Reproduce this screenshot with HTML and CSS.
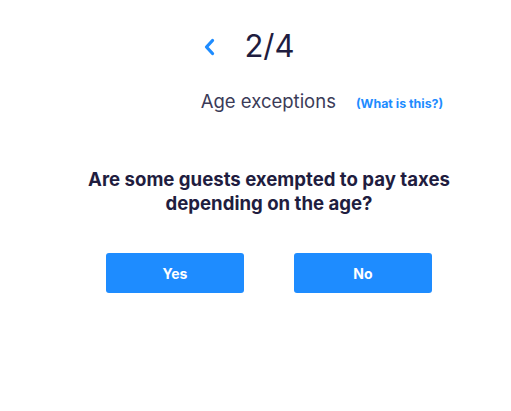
FILE: index.html
```html
<!DOCTYPE html>
<html>
<head>
<meta charset="utf-8">
<link rel="stylesheet" href="styles.css">
</head>
<body>
<div class="page">
  <div class="stepper">
    <span class="back">
      <svg width="13" height="18" viewBox="0 0 13 18"><path d="M9.5 2.5 L3.5 9 L9.5 15.5" fill="none" stroke="#1e8cff" stroke-width="3.3" stroke-linecap="round" stroke-linejoin="round"/></svg>
    </span>
    <span class="count">2/4</span>
  </div>
  <div class="subtitle">
    <span class="label">Age exceptions</span>
    <a class="help">(What is this?)</a>
  </div>
  <h2 class="question">Are some guests exempted to pay taxes<br>depending on the age?</h2>
  <div class="actions">
    <button class="btn">Yes</button>
    <button class="btn">No</button>
  </div>
</div>
</body>
</html>
```
FILE: styles.css
```css
html, body {
  margin: 0;
  padding: 0;
  background: #ffffff;
  overflow: hidden;
}
body {
  font-family: "Inter", "Lato", sans-serif;
  color: #1f1d3f;
}
.page {
  width: 511px;
  box-sizing: border-box;
  padding-left: 27px;
  display: flex;
  flex-direction: column;
  align-items: center;
}
.stepper {
  display: flex;
  align-items: center;
  gap: 28px;
  margin-top: 26px;
  margin-left: -40px;
  height: 40px;
}
.back {
  display: flex;
  width: 13px;
  height: 18px;
  margin-top: 2px;
}
.count {
  font-size: 31px;
  font-weight: 400;
  color: #1f1d3f;
  line-height: 40px;
}
.subtitle {
  display: flex;
  align-items: baseline;
  gap: 20px;
  margin-top: 24px;
  margin-left: 106px;
}
.label {
  font-size: 18.5px;
  color: #3b3b58;
}
.help {
  font-size: 12.4px;
  font-weight: 700;
  color: #1e8cff;
}
.question {
  margin: 55px 0 0;
  font-size: 18.6px;
  font-weight: 700;
  line-height: 24px;
  text-align: center;
  color: #1f1d3f;
}
.actions {
  display: flex;
  gap: 50px;
  margin-top: 38px;
}
.btn {
  width: 138px;
  height: 40px;
  border: none;
  border-radius: 3px;
  background: #1e8cff;
  color: #ffffff;
  font-family: "Inter", "Lato", sans-serif;
  font-size: 14px;
  font-weight: 700;
  padding: 0;
}
```
